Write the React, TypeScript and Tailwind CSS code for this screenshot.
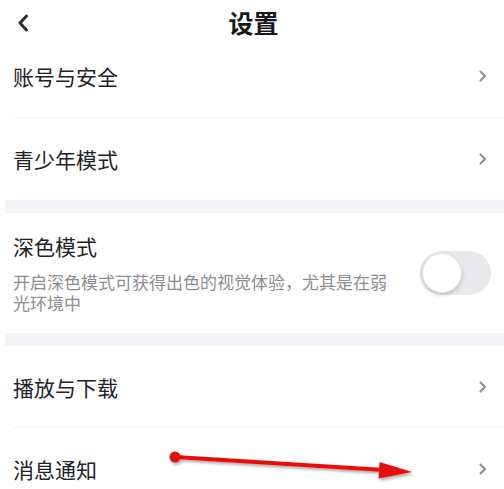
import type { ReactNode } from "react";

const font = { fontFamily: '"Noto Sans CJK SC", "Noto Sans", sans-serif' };

function Chevron() {
  return (
    <svg width="8" height="12" viewBox="0 0 8 12" className="shrink-0">
      <polyline points="1.5,1.5 6,6 1.5,10.5" fill="none" stroke="#8a8d93" strokeWidth="2" strokeLinecap="round" strokeLinejoin="round" />
    </svg>
  );
}

function Row({ label, className = "" }: { label: string; className?: string }) {
  return (
    <div className={`flex items-center justify-between pl-[13px] pr-[17px] ${className}`}>
      <span className="text-[21px] leading-[26px] text-[#1f2226]">{label}</span>
      <Chevron />
    </div>
  );
}

function Divider() {
  return <div className="ml-[14px] h-px bg-[#eef0f2]" />;
}

function Band() {
  return <div className="ml-[5px] h-[13px] bg-[#f2f4f7]" />;
}

function Toggle() {
  return (
    <div className="flex h-[44px] w-[71px] shrink-0 items-center rounded-full bg-[#e9e9eb] p-[2px]">
      <div className="h-[40px] w-[40px] rounded-full border border-[#e2e2e2] bg-white shadow-[0_2px_4px_rgba(0,0,0,0.18)]" />
    </div>
  );
}

function Arrow() {
  return (
    <svg className="pointer-events-none absolute left-0 top-0" width="504" height="489" viewBox="0 0 504 489">
      <defs>
        <filter id="sh" x="-10%" y="-50%" width="120%" height="200%">
          <feDropShadow dx="1.5" dy="2" stdDeviation="1.5" floodColor="#000" floodOpacity="0.35" />
        </filter>
      </defs>
      <g filter="url(#sh)">
        <line x1="175" y1="457" x2="384" y2="470" stroke="#e8100f" strokeWidth="4" strokeLinecap="round" />
        <circle cx="175" cy="457" r="5.5" fill="#e8100f" />
        <polygon points="412,472 378.5,478.5 379.5,462" fill="#e8100f" />
      </g>
    </svg>
  );
}

function Screen({ children }: { children: ReactNode }) {
  return (
    <div className="relative h-[489px] w-[504px] overflow-hidden bg-white" style={font}>
      {children}
    </div>
  );
}

export default function App() {
  return (
    <Screen>
      <div className="grid h-[44px] grid-cols-[1fr_auto_1fr] items-center">
        <div className="pl-[16px] pt-[2px]">
          <svg width="14" height="20" viewBox="0 0 14 20">
            <polyline points="10.5,3 4,10 10.5,17" fill="none" stroke="#2a2d31" strokeWidth="3" strokeLinecap="round" strokeLinejoin="round" />
          </svg>
        </div>
        <span className="pl-[3px] text-[25px] font-bold leading-[30px] text-[#16181b]">设置</span>
        <div />
      </div>

      <Row label="账号与安全" className="h-[73px] pb-[9px]" />
      <Divider />
      <Row label="青少年模式" className="h-[82px]" />
      <Band />

      <div className="flex h-[120px] items-center justify-between pl-[13px] pr-[13px]">
        <div className="w-[385px]">
          <div className="text-[21px] leading-[26px] text-[#1f2226]">深色模式</div>
          <p className="mt-[12px] text-[17px] leading-[21px] text-[#8b8d91]">
            开启深色模式可获得出色的视觉体验，尤其是在弱光环境中
          </p>
        </div>
        <Toggle />
      </div>
      <Band />

      <Row label="播放与下载" className="h-[81px]" />
      <Divider />
      <Row label="消息通知" className="h-[82px]" />

      <Arrow />
    </Screen>
  );
}
